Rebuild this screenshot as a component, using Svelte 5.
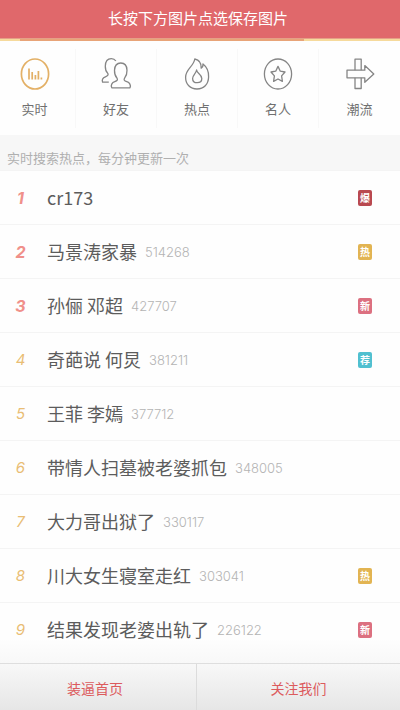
<script>
  const tabs = [
    { label: '实时', icon: 'live' },
    { label: '好友', icon: 'friends' },
    { label: '热点', icon: 'hot' },
    { label: '名人', icon: 'star' },
    { label: '潮流', icon: 'trend' }
  ];

  const topics = [
    { title: 'cr173', top: true, tag: '爆', tone: 'burst' },
    { title: '马景涛家暴', count: 514268, top: true, tag: '热', tone: 'warm' },
    { title: '孙俪 邓超', count: 427707, top: true, tag: '新', tone: 'fresh' },
    { title: '奇葩说 何炅', count: 381211, tag: '荐', tone: 'pick' },
    { title: '王菲 李嫣', count: 377712 },
    { title: '带情人扫墓被老婆抓包', count: 348005 },
    { title: '大力哥出狱了', count: 330117 },
    { title: '川大女生寝室走红', count: 303041, tag: '热', tone: 'warm' },
    { title: '结果发现老婆出轨了', count: 226122, tag: '新', tone: 'fresh' }
  ];
</script>

<div class="page">
  <header><h1>长按下方图片点选保存图片</h1></header>
  <div class="progress"><span></span></div>

  <nav class="tabs">
    {#each tabs as tab}
      <button type="button" class:active={tab.icon === 'live'}>
        <svg viewBox="0 0 32 34" width="32" height="34" aria-hidden="true">
          {#if tab.icon === 'live'}
            <ellipse cx="16" cy="17" rx="13.6" ry="15" stroke-width="1.7" />
            <path d="M10 11.5V22.5M13.2 15V22.5M16.4 18V22.5M19.4 14V22.5M22.4 20.5V22.5" stroke-width="1.7" />
          {:else if tab.icon === 'friends'}
            <path d="M8.8 25.2H2.6C1.6 22.3 3 20.7 5.4 19.8C7.7 18.9 8.6 18.1 7.8 16.4C5.9 14.4 5.2 12 5.3 9.2C5.4 4.6 7.6 1.6 11.3 1.6C13.4 1.6 14.9 2.5 15.9 4" />
            <path d="M11.8 30.8C10.4 28 12 25.7 14.8 24.7C17.4 23.8 18 22.8 17 21.2C15.3 19.2 14.4 16.2 14.5 13.2C14.7 8.6 17 6 20.8 6S26.9 8.6 27 13.2C27.1 16.2 26.2 19.2 24.6 21.2C23.6 22.8 24.1 23.8 26.8 24.7C29.6 25.7 31.2 28 30 30.8Z" />
          {:else if tab.icon === 'hot'}
            <path d="M13.8 2C18.6 3 20.4 7 20.2 11.2C21.6 10.2 22.2 8.7 22 7C25.9 10 27.8 15 27.6 20C27.4 27.4 22.8 32 16 32S4.6 27.4 4.6 20.2C4.6 12.2 12.6 9.6 13.8 2Z" />
            <path d="M15.6 13C15.8 16.5 20.8 17.3 20.8 21.5C20.8 24 18.8 25.7 16.2 25.7S11.6 24 11.6 21.4C11.6 18.2 15 16.8 15.6 13Z" />
          {:else if tab.icon === 'star'}
            <ellipse cx="16" cy="17" rx="13.6" ry="15" />
            <path d="M16 9.4L18.3 14.2L23 15L19.6 18.9L20.4 24.4L16 22L11.6 24.4L12.4 18.9L9 15L13.7 14.2Z" />
          {:else}
            <path d="M11 13.2V2.2H17.2V13.2M11 20.8V31.5H17.2V20.8" />
            <path d="M3 13.2H20.8V8.6L29.8 17L20.8 25.3V20.8H3Z" />
          {/if}
        </svg>
        <span>{tab.label}</span>
      </button>
    {/each}
  </nav>

  <p class="notice">实时搜索热点，每分钟更新一次</p>

  <ol>
    {#each topics as topic, i}
      <li>
        <span class="rank" class:top={topic.top}>{i + 1}</span>
        <span class="title">{topic.title}</span>
        {#if topic.count}<span class="count">{topic.count}</span>{/if}
        {#if topic.tag}<span class="tag {topic.tone}">{topic.tag}</span>{/if}
      </li>
    {/each}
  </ol>

  <footer>
    <a href="#home">装逼首页</a>
    <a href="#follow">关注我们</a>
  </footer>
</div>

<style>
  .page {
    display: flex;
    flex-direction: column;
    min-height: 100vh;
    background: #fefefe;
    font-family: 'Noto Sans CJK SC', sans-serif;
    color: #5c5c5c;
  }

  header {
    padding: 6px 0 8px;
    background: #e0686b;
    text-align: center;
  }

  h1 {
    margin: 0 4px 0 0;
    font-size: 15px;
    font-weight: 400;
    line-height: 24px;
    color: #fff;
  }

  .progress {
    padding: 0 24% 0 5%;
    border-top: 1px solid #e5a087;
    background: #f6da9c;
  }

  .progress span {
    display: block;
    height: 2px;
    background: #e8a478;
  }

  .tabs {
    display: grid;
    grid-template-columns: 76fr 81fr 81fr 81fr 81fr;
    padding: 8px 0 7px;
  }

  .tabs button {
    display: flex;
    flex-direction: column;
    align-items: center;
    gap: 8px;
    padding: 8px 0 9px;
    border: 0;
    border-right: 1px solid #f8f8f8;
    background: none;
    font: inherit;
    font-size: 13px;
    line-height: 20px;
    color: #707070;
  }

  .tabs button:first-child {
    padding-right: 6px;
  }

  .tabs button:last-child {
    border-right: 0;
  }

  .tabs svg {
    fill: none;
    stroke: #858585;
    stroke-width: 1.3;
    stroke-linejoin: round;
  }

  .tabs .active svg {
    stroke: #e3b066;
  }

  .notice {
    margin: 0;
    padding: 13px 7px 2px;
    background: #f7f7f7;
    font-size: 13px;
    line-height: 20px;
    color: #b0b0b0;
  }

  ol {
    flex: 1;
    margin: 0;
    padding: 0 0 7px;
    list-style: none;
    background: linear-gradient(#fefefe 95%, #f8f8f8);
  }

  li {
    display: flex;
    align-items: center;
    height: 53px;
    padding-right: 28px;
    border-top: 1px solid #f4f4f4;
  }

  .rank {
    width: 41px;
    margin-right: 6px;
    text-align: center;
    font-family: Inter, sans-serif;
    font-size: 15px;
    font-style: italic;
    color: #e9bd74;
  }

  .rank.top {
    font-size: 16px;
    font-weight: 700;
    color: #f0908a;
  }

  .title {
    padding-bottom: 2px;
    font-size: 18px;
    line-height: 28px;
  }

  .count {
    margin-left: 8px;
    font-family: Inter, sans-serif;
    font-size: 13px;
    font-weight: 300;
    color: #b4b4b4;
  }

  .tag {
    width: 14px;
    margin-left: auto;
    border-radius: 2px;
    font-size: 10px;
    font-weight: 700;
    line-height: 16px;
    text-align: center;
    color: #fff;
  }

  .burst {
    background: #b94950;
  }

  .warm {
    background: #e2b452;
  }

  .fresh {
    background: #dc7080;
  }

  .pick {
    background: #50c0d0;
  }

  footer {
    display: grid;
    grid-template-columns: 33fr 34fr;
    border-top: 1px solid #dedede;
    background: linear-gradient(#f8f8f8, #e6e6e6);
  }

  footer a {
    padding: 14px 6px 12px 0;
    font-size: 14px;
    line-height: 20px;
    text-align: center;
    text-decoration: none;
    color: #dc5b5d;
  }

  footer a:first-child {
    border-right: 1px solid #dcdcdc;
  }

  footer a:last-child {
    padding-right: 0;
  }
</style>
